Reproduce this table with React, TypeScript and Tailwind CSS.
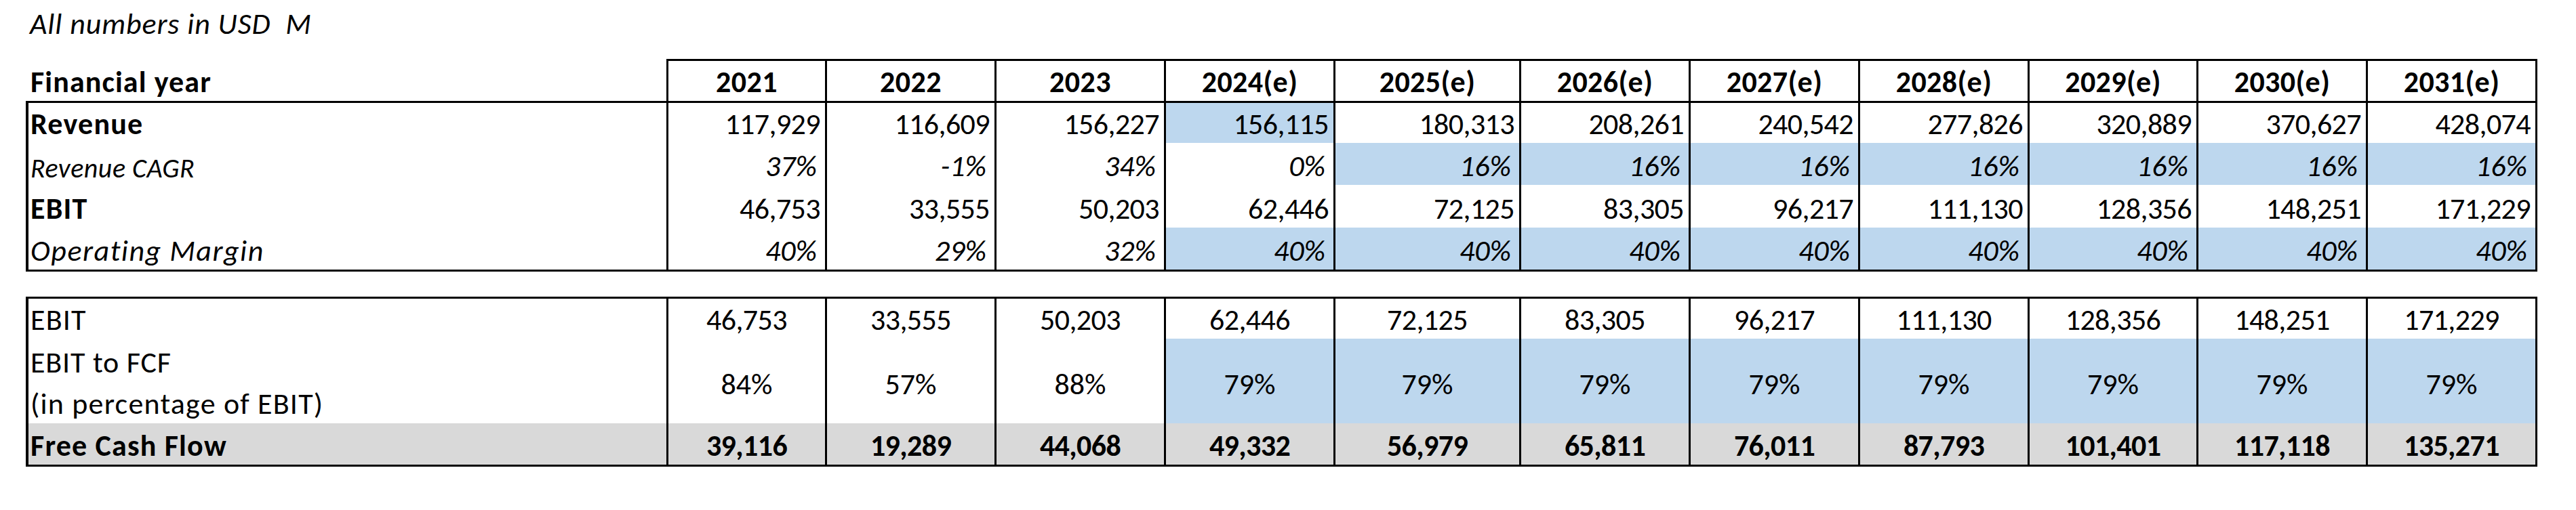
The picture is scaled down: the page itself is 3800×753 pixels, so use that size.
import React from "react";

const COLS = "grid-cols-[941px_234px_250px_250px_250px_274px_250px_250px_250px_249px_250px_250px]";
const HEAD_COLS = "grid-cols-[945px_234px_250px_250px_250px_274px_250px_250px_250px_249px_250px_253px]";

const years = ["2021", "2022", "2023", "2024(e)", "2025(e)", "2026(e)", "2027(e)", "2028(e)", "2029(e)", "2030(e)", "2031(e)"];
const revenue = ["117,929", "116,609", "156,227", "156,115", "180,313", "208,261", "240,542", "277,826", "320,889", "370,627", "428,074"];
const cagr = ["37%", "-1%", "34%", "0%", "16%", "16%", "16%", "16%", "16%", "16%", "16%"];
const ebit = ["46,753", "33,555", "50,203", "62,446", "72,125", "83,305", "96,217", "111,130", "128,356", "148,251", "171,229"];
const margin = ["40%", "29%", "32%", "40%", "40%", "40%", "40%", "40%", "40%", "40%", "40%"];
const toFcf = ["84%", "57%", "88%", "79%", "79%", "79%", "79%", "79%", "79%", "79%", "79%"];
const fcf = ["39,116", "19,289", "44,068", "49,332", "56,979", "65,811", "76,011", "87,793", "101,401", "117,118", "135,271"];

const BLUE = "bg-[#bdd7ee]";

type RowProps = {
  label: React.ReactNode;
  labelCls?: string;
  values: string[];
  cellCls: string;
  fill?: (i: number) => boolean;
  height: string;
  rowBg?: string;
};

function DataRow({ label, labelCls = "", values, cellCls, fill = () => false, height, rowBg = "" }: RowProps) {
  return (
    <div className={`grid ${COLS} ${height} ${rowBg}`}>
      <div className={`flex items-end pl-[3px] tracking-[1.2px] ${labelCls}`}>{label}</div>
      {values.map((v, i) => (
        <div key={i} className={`flex border-l-[3px] border-black ${cellCls} ${fill(i) ? BLUE : ""}`}>
          {v}
        </div>
      ))}
    </div>
  );
}

export default function App() {
  return (
    <div className="w-[3800px] h-[753px] bg-white text-black font-[Carlito,Calibri,sans-serif] text-[44px] leading-[53px]">
      <div className="h-[87px] pt-[9px] pl-[44px] italic whitespace-pre tracking-[0.9px]">All numbers in USD  M</div>

      {/* top table */}
      <div className="ml-[38px] w-[3705px]">
        <div className={`grid ${HEAD_COLS} h-[62px] font-bold`}>
          <div className="flex items-end pl-[7px] pb-[1px] tracking-[1.1px]">Financial year</div>
          {years.map((y, i) => (
            <div
              key={y}
              className={`flex items-end justify-center pb-[1px] tracking-[0.4px] border-t-[3px] border-l-[3px] border-black ${i === years.length - 1 ? "border-r-[3px]" : ""}`}
            >
              {y}
            </div>
          ))}
        </div>
        <div className="border-[3px] border-l-[4px] border-black">
          <DataRow
            label="Revenue"
            labelCls="font-bold pb-[1px]"
            values={revenue}
            cellCls="items-end justify-end pr-[7px] pb-[1px] tracking-[-0.6px]"
            fill={(i) => i === 3}
            height="h-[59px]"
          />
          <DataRow
            label="Revenue CAGR"
            labelCls="italic text-[40px] leading-[49px] !tracking-[0.5px]"
            values={cagr}
            cellCls="items-end justify-end pr-[12px] pb-[1px] italic"
            fill={(i) => i >= 4}
            height="h-[62px]"
          />
          <DataRow
            label="EBIT"
            labelCls="font-bold pb-[1px]"
            values={ebit}
            cellCls="items-end justify-end pr-[7px] pb-[1px] tracking-[-0.6px]"
            height="h-[63px]"
          />
          <DataRow
            label="Operating Margin"
            labelCls="italic pb-[1px] !tracking-[1.5px]"
            values={margin}
            cellCls="items-end justify-end pr-[12px] pb-[1px] italic"
            fill={(i) => i >= 3}
            height="h-[62px]"
          />
        </div>
      </div>

      {/* bottom table */}
      <div className="ml-[38px] w-[3705px] mt-[37px] border-[3px] border-l-[4px] border-black">
        <DataRow
          label="EBIT"
          labelCls="pb-[1px]"
          values={ebit}
          cellCls="items-end justify-center pb-[1px] tracking-[-0.6px]"
          height="h-[59px]"
        />
        <DataRow
          label={
            <div className="leading-[61px] mb-[-2px]">
              <div className="tracking-[0.8px]">EBIT to FCF</div>
              <div>(in percentage of EBIT)</div>
            </div>
          }
          values={toFcf}
          cellCls="items-center justify-center pt-[9px]"
          fill={(i) => i >= 3}
          height="h-[125px]"
        />
        <DataRow
          label="Free Cash Flow"
          labelCls="font-bold pb-[1px]"
          values={fcf}
          cellCls="items-end justify-center pb-[1px] font-bold tracking-[-0.6px]"
          height="h-[61px]"
          rowBg="bg-[#d9d9d9]"
        />
      </div>
    </div>
  );
}
